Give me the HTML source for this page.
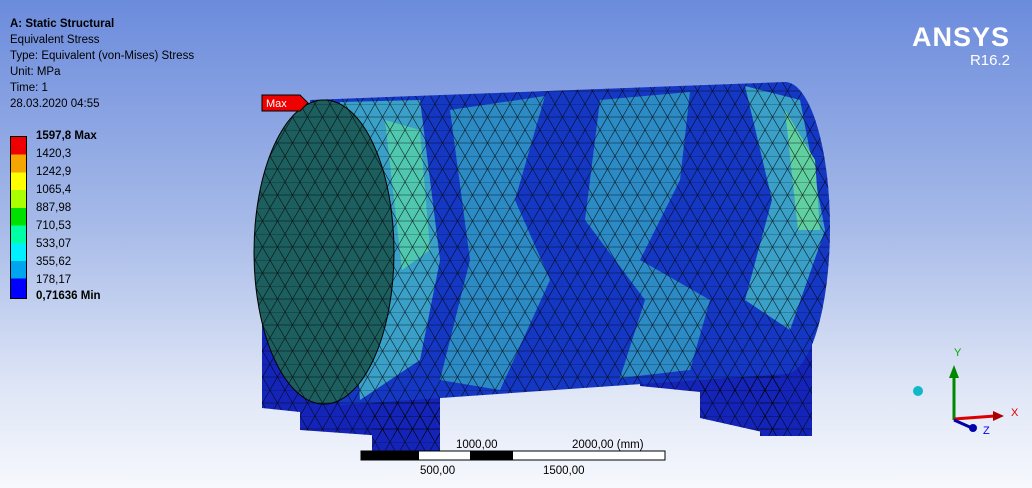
<!DOCTYPE html>
<html><head><meta charset="utf-8"><style>
html,body{margin:0;padding:0}
body{width:1032px;height:488px;overflow:hidden;position:relative;background:linear-gradient(#6b8bdc 0%,#a5b9e8 45%,#dfe6f6 80%,#f6f8fd 100%);font-family:"Liberation Sans",sans-serif;color:#000}
.t{position:absolute;left:10px;font-size:11.5px;line-height:16px}
.lg{position:absolute;left:10px;top:136px}
.lb{position:absolute;left:26px;font-size:11.5px;white-space:nowrap}
</style></head><body>
<div class="t" style="top:16px;font-weight:bold">A: Static Structural</div>
<div class="t" style="top:32px">Equivalent Stress</div>
<div class="t" style="top:48px">Type: Equivalent (von-Mises) Stress</div>
<div class="t" style="top:64px">Unit: MPa</div>
<div class="t" style="top:80px">Time: 1</div>
<div class="t" style="top:96px">28.03.2020 04:55</div>
<div class="lg">
<div style="position:absolute;left:0;top:0;width:17px;height:163px;border:1px solid #000;box-sizing:border-box;background:linear-gradient(#e00 0 11%,#f5a500 11% 22%,#ff0 22% 33%,#aaff00 33% 44%,#00e000 44% 55%,#00ffa5 55% 66%,#00f0ff 66% 77%,#00a5f0 77% 88%,#0000ff 88%)"></div>
<div class="lb" style="top:-6px;font-weight:bold">1597,8 Max</div>
<div class="lb" style="top:12px">1420,3</div>
<div class="lb" style="top:30px">1242,9</div>
<div class="lb" style="top:48px">1065,4</div>
<div class="lb" style="top:66px">887,98</div>
<div class="lb" style="top:84px">710,53</div>
<div class="lb" style="top:102px">533,07</div>
<div class="lb" style="top:120px">355,62</div>
<div class="lb" style="top:138px">178,17</div>
<div class="lb" style="top:154px;font-weight:bold">0,71636 Min</div>
</div>
<div style="position:absolute;right:22px;top:22px;font-size:27px;font-weight:bold;color:#fff;letter-spacing:1px">ANSYS</div>
<div style="position:absolute;right:22px;top:52px;font-size:15px;color:#fff">R16.2</div>
<svg width="1032" height="488" style="position:absolute;left:0;top:0">
<defs>
<pattern id="m" width="30" height="26" patternUnits="userSpaceOnUse">
<path d="M0 0L30 0L15 26Z M0 26L15 0M30 26L15 0M0 13L30 13" fill="none" stroke="#000" stroke-width=".6" stroke-opacity=".8"/>
</pattern>
</defs>
<g fill="#1424b8">
<path d="M262 270L300 270L300 412L262 408Z"/>
<path d="M300 360L440 360L440 440L300 430Z"/>
<path d="M372 290L440 290L440 455L372 455Z"/>
<path d="M640 360L780 360L780 400L640 386Z"/>
<path d="M700 372L780 372L780 436L700 418Z"/>
<path d="M760 258L812 258L812 436L760 436Z"/>
</g>
<g fill="url(#m)">
<path d="M262 270L300 270L300 412L262 408Z"/>
<path d="M300 360L440 360L440 440L300 430Z"/>
<path d="M372 290L440 290L440 455L372 455Z"/>
<path d="M640 360L780 360L780 400L640 386Z"/>
<path d="M700 372L780 372L780 436L700 418Z"/>
<path d="M760 258L812 258L812 436L760 436Z"/>
</g>
<path d="M310 100L785 82A45 146 0 0 1 785 374L340 405Z" fill="#1538c4"/>
<path d="M340 102L420 100L440 260L420 360L360 400Z" fill="#3aa0c8"/>
<path d="M450 110L545 96L515 200L550 280L500 390L440 380L470 260Z" fill="#2c8ac4"/>
<path d="M600 100L690 92L680 180L640 260L710 300L690 370L620 378L645 300L585 220Z" fill="#2c8ac4"/>
<path d="M745 86L800 100L825 230L790 330L745 300L772 200Z" fill="#3aa0c8"/>
<path d="M385 120L420 130L430 250L402 270Z" fill="#50c8b0"/>
<path d="M785 110L815 160L820 230L798 230Z" fill="#60d0a0"/>
<path d="M310 100L785 82A45 146 0 0 1 785 374L340 405Z" fill="url(#m)"/>
<ellipse cx="324" cy="252" rx="70" ry="152" fill="#1d5e5e" stroke="#000"/>
<ellipse cx="324" cy="252" rx="70" ry="152" fill="url(#m)"/>
<path d="M262 95L300 95L308 103L300 111L262 111Z" fill="#e00" stroke="#000"/>
<text x="266" y="107" font-family="Liberation Sans" font-size="11" fill="#fff">Max</text>
<rect x="361" y="451" width="304" height="9" fill="#fff" stroke="#000"/>
<rect x="361" y="451" width="58" height="9" fill="#000"/>
<rect x="470" y="451" width="43" height="9" fill="#000"/>
<g font-family="Liberation Sans" font-size="11.5">
<text x="456" y="448">1000,00</text><text x="572" y="448">2000,00 (mm)</text>
<text x="420" y="474">500,00</text><text x="543" y="474">1500,00</text></g>
<circle cx="918" cy="391" r="5" fill="#10b8c8"/>
<line x1="954" y1="420" x2="954" y2="375" stroke="#080" stroke-width="3"/>
<path d="M949 378L954 365L959 378Z" fill="#080"/>
<line x1="954" y1="419" x2="995" y2="416" stroke="#d00" stroke-width="3"/>
<path d="M993 411L1004 416L993 421Z" fill="#a00"/>
<line x1="954" y1="420" x2="972" y2="428" stroke="#00a" stroke-width="3"/>
<circle cx="973" cy="428" r="4" fill="#00a"/>
<g font-family="Liberation Sans" font-size="11"><text x="954" y="356" fill="#0a0">Y</text><text x="1011" y="416" fill="#d00">X</text><text x="983" y="434" fill="#00f">Z</text></g>
</svg>
</body></html>
